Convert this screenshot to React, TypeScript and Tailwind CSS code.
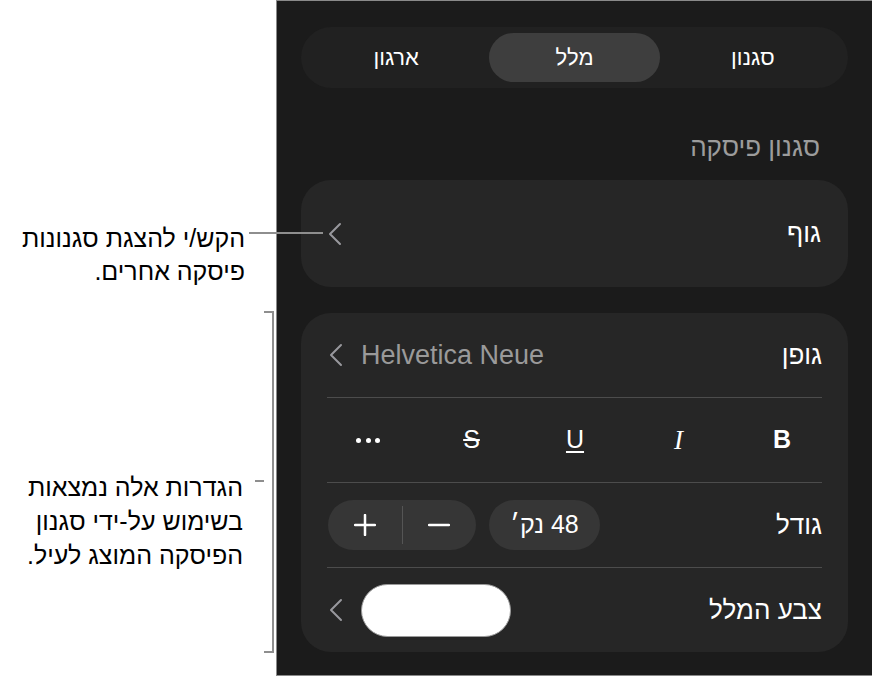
import React from 'react';

const SANS = "font-['Liberation_Sans','DejaVu_Sans',sans-serif]";

// thin "<" disclosure chevron used on the card rows
const Chevron: React.FC = () => (
  <svg width="14" height="24" viewBox="0 0 14 24" fill="none" className="shrink-0">
    <polyline points="12,2 2,12 12,22" stroke="#98989d" strokeWidth="2" strokeLinecap="round" strokeLinejoin="round" />
  </svg>
);

const Divider: React.FC = () => <div className="h-px bg-[#4c4c4c]" />;

const Row: React.FC<{ children: React.ReactNode }> = ({ children }) => (
  <div className="h-[84px] flex items-center justify-between">{children}</div>
);

const App: React.FC = () => {
  return (
    <div className={`relative flex w-[872px] h-[676px] bg-white ${SANS}`}>
      {/* callout lines and notes on the left */}
      <div className="w-[276px] shrink-0 flex flex-col" dir="rtl">
        <p className="pt-[222px] pr-[31px] text-[25px] leading-[33px] text-black whitespace-nowrap">
          הקש/י להצגת סגנונות
          <br />
          פיסקה אחרים.
        </p>
        <div className="mt-[23px] h-[342px] flex">
          <div className="w-[2px]" />
          <div className="w-[10px] border-y-2 border-r-2 border-[#8e8e8e]" />
          <div className="w-[9px] pt-[169px]">
            <div className="h-[2px] bg-[#8e8e8e]" />
          </div>
          <p className="pt-[159px] pr-[12px] text-[25px] leading-[34px] text-black whitespace-nowrap">
            הגדרות אלה נמצאות
            <br />
            בשימוש על-ידי סגנון
            <br />
            הפיסקה המוצג לעיל.
          </p>
        </div>
      </div>

      {/* leader from the first note to the chevron */}
      <div className="absolute left-[249px] top-[232px] w-[74px] h-[2px] bg-[#8e8e8e] z-10" />

      <div className="flex-1 h-full bg-[#1b1b1b] border-l border-y border-[#8a8a8a] px-6 pt-[26px]" dir="rtl">
        <div className="h-[61px] rounded-full bg-[#212121] p-[6px] grid grid-cols-3 text-[22px] text-white">
          <div className="flex items-center justify-center">סגנון</div>
          <div className="flex items-center justify-center mx-[4px] rounded-full bg-[#3e3e3e]">מלל</div>
          <div className="flex items-center justify-center">ארגון</div>
        </div>

        <h2 className="mt-[44px] px-[28px] h-[30px] leading-[30px] text-[26px] text-[#9c9c9c]">סגנון פיסקה</h2>

        <div className="mt-[18px] h-[107px] rounded-[30px] bg-[#262626] px-[27px] flex items-center justify-between">
          <span className="text-[26px] text-white">גוף</span>
          <Chevron />
        </div>

        <div className="mt-[26px] rounded-[30px] bg-[#262626] px-[26px] text-white text-[26px]">
          <Row>
            <span>גופן</span>
            <div className="flex items-center gap-[18px] pl-[2px]" dir="ltr">
              <Chevron />
              <span className="text-[#9a9a9a] text-[27px]">Helvetica Neue</span>
            </div>
          </Row>
          <Divider />
          <div className="h-[84px] flex items-center justify-between pr-[28px] pl-[29px]">
            <span className="w-[24px] text-center font-bold text-[25px]">B</span>
            <span className="w-[24px] text-center italic text-[27px] font-['Liberation_Serif',serif]">I</span>
            <span className="w-[24px] text-center underline underline-offset-[3px] decoration-2 text-[25px]">U</span>
            <span className="w-[24px] text-center line-through decoration-2 text-[25px]">S</span>
            <span className="w-[24px] flex items-center justify-between">
              <span className="w-[5px] h-[5px] rounded-full bg-white" />
              <span className="w-[5px] h-[5px] rounded-full bg-white" />
              <span className="w-[5px] h-[5px] rounded-full bg-white" />
            </span>
          </div>
          <Divider />
          <Row>
            <span>גודל</span>
            <div className="flex items-center gap-[13px] pl-[1px]">
              <div className="w-[111px] h-[50px] rounded-full bg-[#363636] flex items-center justify-center text-[25px]">48 נק׳</div>
              <div className="w-[148px] h-[50px] rounded-full bg-[#363636] flex items-center">
                <div className="flex-1 flex justify-center">
                  <svg width="22" height="22" viewBox="0 0 22 22">
                    <line x1="1" y1="11" x2="21" y2="11" stroke="white" strokeWidth="2.5" strokeLinecap="round" />
                  </svg>
                </div>
                <div className="w-px h-[38px] bg-[#555]" />
                <div className="flex-1 flex justify-center">
                  <svg width="22" height="22" viewBox="0 0 22 22">
                    <line x1="1" y1="11" x2="21" y2="11" stroke="white" strokeWidth="2.5" strokeLinecap="round" />
                    <line x1="11" y1="1" x2="11" y2="21" stroke="white" strokeWidth="2.5" strokeLinecap="round" />
                  </svg>
                </div>
              </div>
            </div>
          </Row>
          <Divider />
          <Row>
            <span>צבע המלל</span>
            <div className="flex items-center gap-[18px] pl-[2px]">
              <div className="w-[150px] h-[53px] rounded-full bg-white border border-[#9a9a9a]" />
              <Chevron />
            </div>
          </Row>
        </div>
      </div>
    </div>
  );
};

export default App;
